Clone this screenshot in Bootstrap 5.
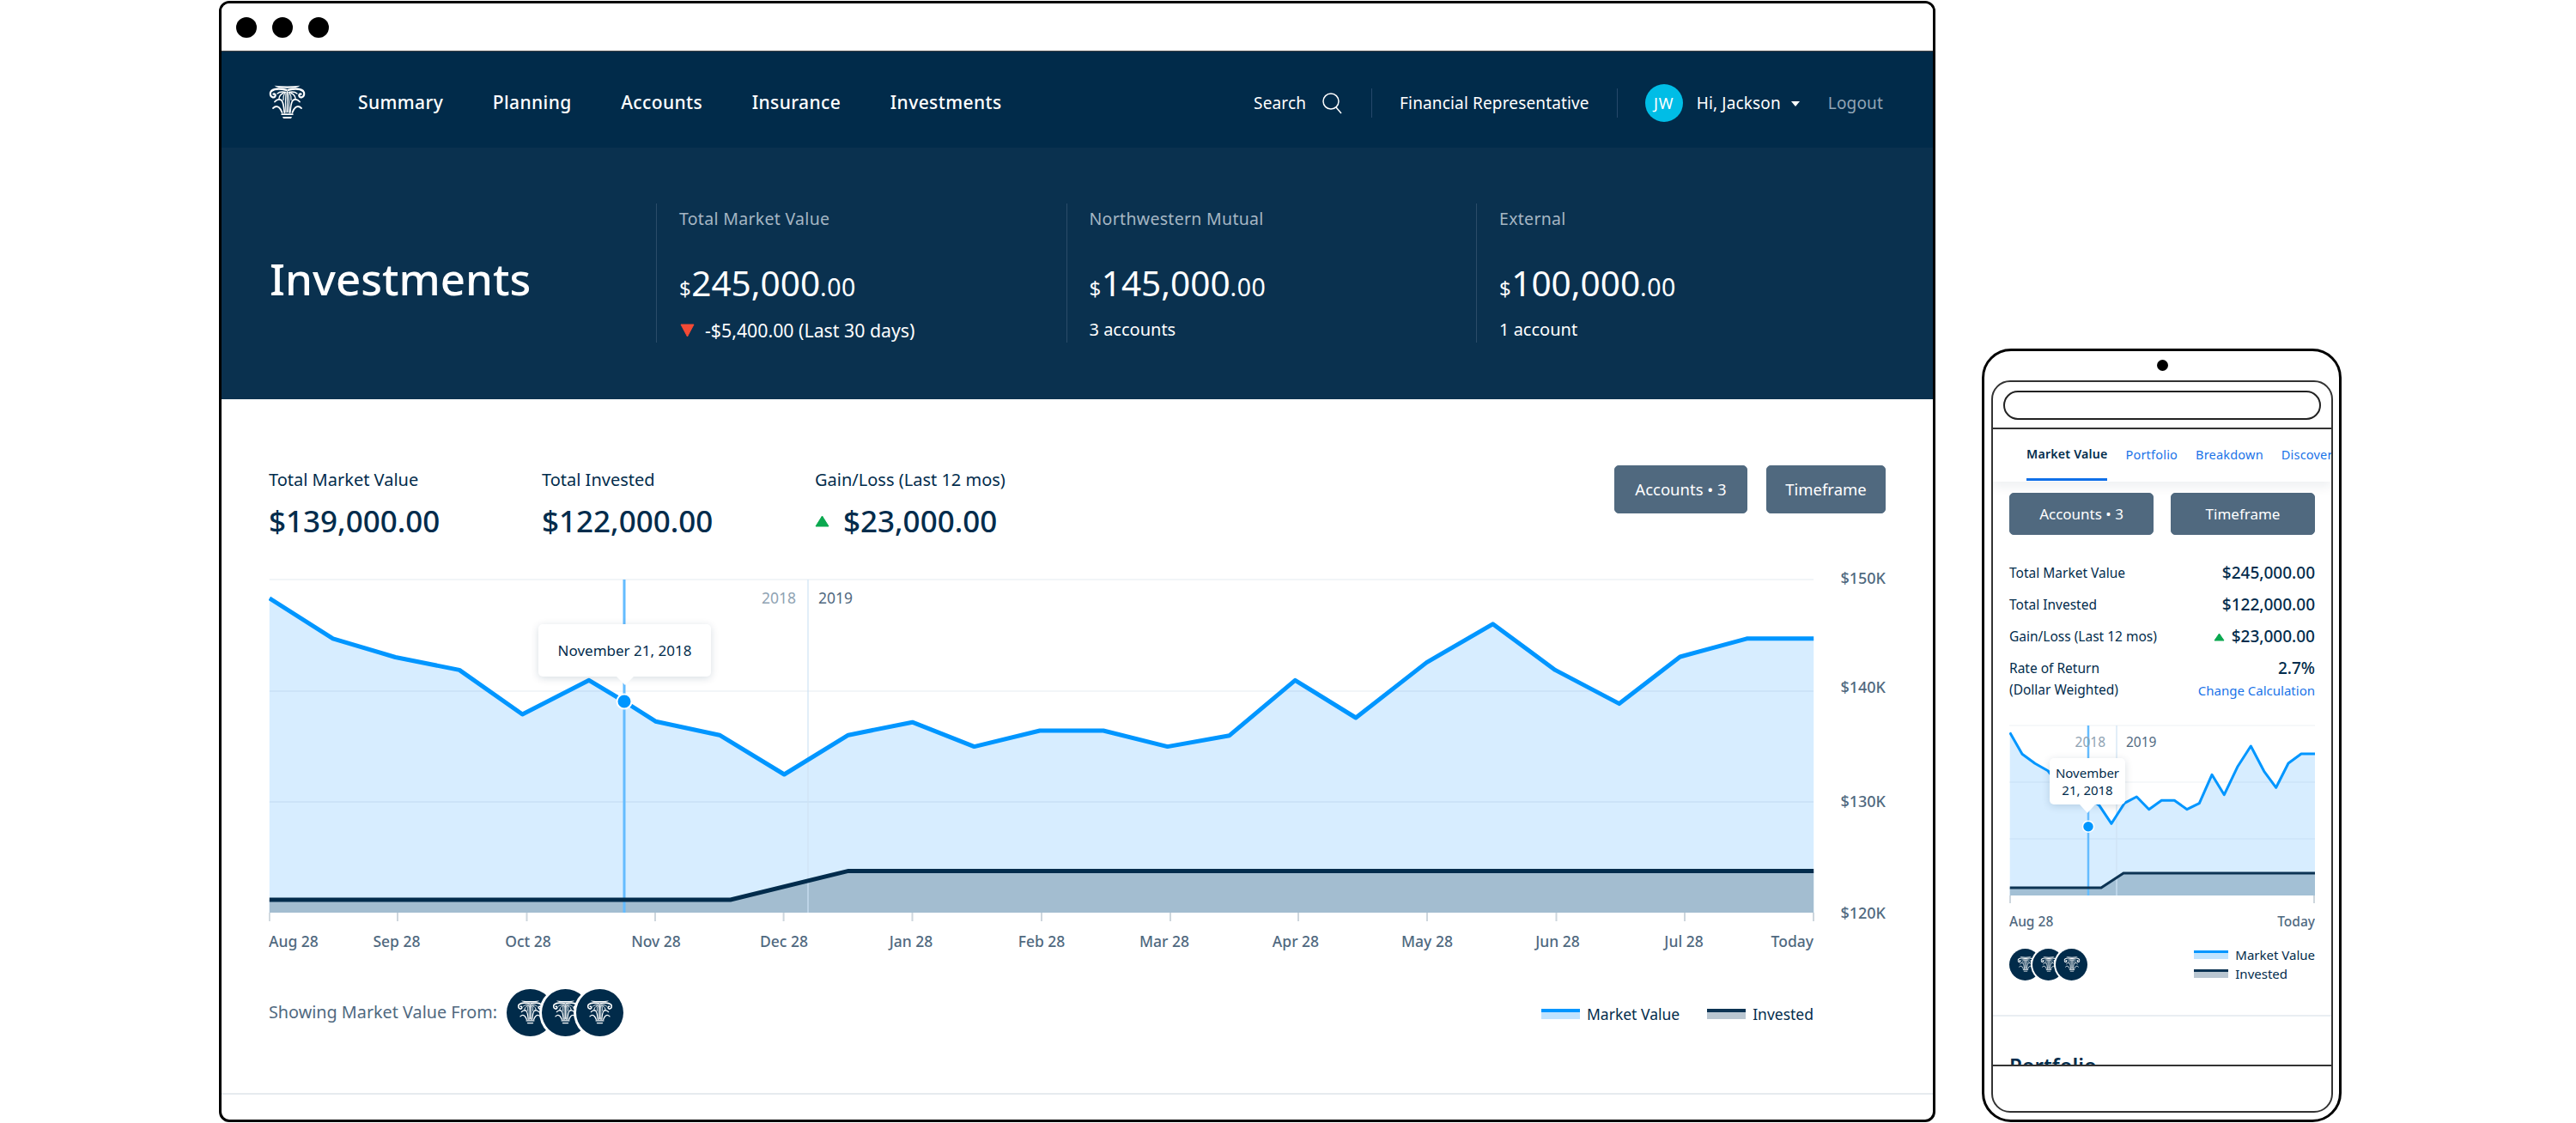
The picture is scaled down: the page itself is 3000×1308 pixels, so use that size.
<!DOCTYPE html>
<html lang="en">
<head>
    <meta charset="UTF-8">
    <title>Investments</title>
    <link href="https://cdn.jsdelivr.net/npm/bootstrap@5.3.1/dist/css/bootstrap.min.css" rel="stylesheet">
    <style>
        body {
            width: 3000px;
            height: 1308px;
            overflow: hidden;
            padding: 0 0 1px 255px;
            gap: 54px;
            font-family: "Noto Sans", "Open Sans", sans-serif;
            color: #022c4c;
            background: #fff;
        }

        /* desktop window */
        .browser-frame {
            width: 1999px;
            height: 1306px;
            border: 3px solid #000;
            border-radius: 12px;
            overflow: hidden;
        }

        .title-bar {
            height: 56px;
            padding-left: 17px;
            gap: 18px;
            border-bottom: 1px solid #444;
        }

        .title-bar span {
            width: 24px;
            height: 24px;
            border-radius: 50%;
            background: #000;
        }

        .top-bar {
            height: 112px;
            padding: 6px 58px 0 54px;
            background: #012b4a;
        }

        .brand-logo {
            width: 45px;
            height: 40px;
            margin-right: 60px;
        }

        .top-bar .nav {
            padding-top: 2px;
        }

        .top-bar .nav-link {
            color: #fff;
            font-size: 21px;
            font-weight: 500;
            letter-spacing: .4px;
            padding: 0;
            margin-right: 57.5px;
        }

        .top-tools {
            padding-top: 2px;
            font-size: 19px;
            letter-spacing: .15px;
            color: #fff;
        }

        .search-icon {
            margin-left: 18px;
            margin-right: 1px;
        }

        .top-sep {
            width: 1px;
            height: 34px;
            background: #26486a;
            margin: 0 32px;
        }

        .avatar {
            width: 44px;
            height: 44px;
            border-radius: 50%;
            background: #00bde6;
            font-size: 18px;
            letter-spacing: 1px;
        }

        .caret-down {
            margin: 2px 33px 0 12px;
            border-left: 5px solid transparent;
            border-right: 5px solid transparent;
            border-top: 6px solid #fff;
        }

        .logout-link {
            color: #91a5b5;
            text-decoration: none;
        }

        .hero-band {
            height: 293px;
            padding: 65px 0 0 56px;
            background: #0a314f;
            color: #fff;
        }

        .hero-title {
            width: 450px;
            height: 162px;
            font-size: 51px;
            font-weight: 500;
            margin: 0;
            padding-top: 13px;
        }

        .hero-col {
            width: 477.5px;
            height: 162px;
            padding-left: 26px;
            border-left: 1px solid #2b4c69;
            font-size: 20px;
        }

        .hero-label {
            margin-top: 3px;
            font-size: 19.5px;
            color: #a5b6c3;
            letter-spacing: .3px;
        }

        .hero-amount {
            font-size: 40.5px;
            line-height: 48px;
            margin-top: 37px;
        }

        .hero-amount small {
            font-size: 28.5px;
            letter-spacing: .5px;
        }

        .hero-amount small:first-child {
            font-size: 24px;
        }

        .hero-sub {
            margin-top: 9px;
        }

        .hero-delta {
            font-size: 21.3px;
            gap: 10px;
        }

        /* desktop content */
        .main-sec {
            padding: 77px 55px 0;
            height: 809px;
        }

        .stat-head {
            height: 118px;
        }

        .stat-col {
            width: 318px;
        }

        .stat-label {
            font-size: 20px;
            line-height: 26px;
            margin-top: 4px;
        }

        .stat-value {
            font-size: 35px;
            font-weight: 500;
            line-height: 42px;
            margin-top: 14px;
        }

        .btn-slate {
            --bs-btn-color: #fff;
            --bs-btn-bg: #50697f;
            --bs-btn-border-color: #50697f;
            --bs-btn-hover-color: #fff;
            --bs-btn-hover-bg: #435a6f;
            --bs-btn-hover-border-color: #435a6f;
            width: 139px;
            height: 56px;
            padding: 0;
            font-size: 18.5px;
            border-radius: 5px;
        }

        .btn-wider {
            width: 155px;
        }

        .btn-pair {
            gap: 22px;
        }

        .chart-wrap {
            position: relative;
        }

        .chart-wrap svg {
            display: block;
        }

        .axis-text {
            font-size: 18px;
            font-weight: 500;
            fill: #50697f;
        }

        .month-text {
            font-size: 17.5px;
        }

        .year-text {
            font-size: 17.5px;
        }

        .chart-tip {
            position: absolute;
            background: #fff;
            border-radius: 5px;
            box-shadow: 0 2px 10px rgba(2, 44, 76, .16);
            color: #022c4c;
            text-align: center;
        }

        .chart-tip::after {
            content: "";
            position: absolute;
            left: 50%;
            top: 100%;
            margin-left: -10px;
            border-left: 10px solid transparent;
            border-right: 10px solid transparent;
            border-top: 10px solid #fff;
        }

        .tip-wide {
            left: 314px;
            top: 67px;
            width: 201px;
            height: 61px;
            font-size: 17px;
            line-height: 61px;
        }

        .source-row {
            margin-top: 41px;
            height: 56px;
        }

        .source-label {
            font-size: 19.8px;
            color: #50697f;
            margin-right: 11px;
        }

        .logo-dot {
            width: 55px;
            height: 55px;
            border-radius: 50%;
            background: #012b4a;
            box-shadow: 0 0 0 3px #fff;
            margin-right: -14.500px;
            position: relative;
        }

        .logo-dot svg {
            width: 31px;
            height: 28px;
        }

        .legend-text {
            font-size: 17.5px;
            margin-top: 4px;
            margin-right: 84px;
        }

        .legend-gap {
            margin-right: 32px;
        }

        .swatch {
            width: 45px;
            height: 12px;
            border-top: 4px solid #0096ff;
            background: #bfe3ff;
        }

        .swatch-dark {
            border-top-color: #0c3353;
            background: #b9c6d1;
        }

        .page-rule {
            margin-top: 66px;
            margin-left: -55px;
            margin-right: -55px;
            border-top: 2px solid #e6ebef;
        }

        /* phone */
        .phone-frame {
            position: relative;
            width: 419px;
            height: 901px;
            border: 3px solid #000;
            border-radius: 34px;
            padding: 34px 8px 0;
            background: #fff;
        }

        .phone-cam {
            position: absolute;
            left: 201px;
            top: 10px;
            width: 13px;
            height: 13px;
            border-radius: 50%;
            background: #000;
        }

        .phone-screen {
            width: 398px;
            height: 853px;
            border: 2px solid #333;
            border-radius: 22px;
            overflow: hidden;
        }

        .phone-head {
            height: 55px;
            padding: 10px 12px 0;
            border-bottom: 2px solid #333;
        }

        .address-pill {
            height: 34px;
            border: 2px solid #222;
            border-radius: 17px;
        }

        .phone-body {
            height: 742px;
            overflow: hidden;
            border-bottom: 2px solid #333;
        }

        .phone-tabs {
            height: 61px;
            padding-left: 39px;
            flex-wrap: nowrap;
            overflow: hidden;
            box-shadow: 0 6px 12px rgba(2, 44, 76, .07);
            position: relative;
        }

        .phone-tabs .nav-link {
            padding: 0;
            height: 60px;
            line-height: 58px;
            margin-right: 21px;
            font-size: 14.5px;
            color: #1a73e8;
            white-space: nowrap;
            letter-spacing: .2px;
        }

        .phone-tabs .nav-link.active {
            color: #022c4c;
            font-size: 14.2px;
            font-weight: 600;
            border-bottom: 3px solid #0f6fe8;
        }

        .phone-sec {
            padding: 13px 19px 0;
        }

        .phone-sec .btn-slate {
            height: 49px;
            width: 168px;
            font-size: 17px;
        }

        .fig-list {
            margin-top: 26px;
            font-size: 15.5px;
        }

        .fig-row {
            height: 37px;
        }

        .fig-list strong {
            font-size: 19px;
            font-weight: 500;
        }

        .fig-last {
            line-height: 25px;
            height: 50px;
            margin-top: 6px;
        }

        .fig-last .change-link {
            font-size: 15px;
        }

        .change-link {
            color: #1a73e8;
            text-decoration: none;
        }

        .phone-chart {
            margin-top: 24px;
        }

        .axis-small {
            font-size: 15.5px;
            font-weight: 500;
            fill: #50697f;
        }

        .tip-narrow {
            left: 47px;
            top: 43px;
            width: 88px;
            height: 54px;
            font-size: 15px;
            line-height: 20px;
            padding-top: 7px;
        }

        .tip-narrow::after {
            margin-left: -9px;
            border-left-width: 9px;
            border-right-width: 9px;
        }

        .phone-legend {
            margin: 16px -19px 0;
            padding: 0 19px 37px;
            border-bottom: 2px solid #e9eef2;
        }

        .phone-legend .logo-dot {
            width: 37px;
            height: 37px;
            margin-right: -10px;
            box-shadow: 0 0 0 2px #fff;
        }

        .phone-legend .logo-dot svg {
            width: 20px;
            height: 18px;
        }

        .phone-legend .swatch {
            width: 40px;
            height: 10px;
            border-top-width: 3px;
        }

        .phone-legend .legend-text {
            font-size: 15px;
            line-height: 22px;
            margin: 0;
        }

        .portfolio-title {
            margin-top: 39px;
            font-size: 24px;
            font-weight: 600;
        }
    </style>
</head>
<body class="d-flex align-items-end">

    <!-- logo used in nav and in the source circles -->
    <svg width="0" height="0" class="position-absolute">
        <symbol id="column-half" viewBox="0 0 42 40">
            <g fill="none" stroke="#fff" stroke-linecap="round">
                <path d="M20 5.800C13 4 6 4.200 2.500 7 .2 9.500 1 13.500 4.200 14.300c2.300.5 3.500-1.300 2.800-3-.4-.9-1.300-1.100-2-.8" stroke-width="2.300"/>
                <path d="M19.500 8.500C15 7.500 11.500 8 9.500 10" stroke-width="1.300"/>
                <path d="M6.500 19.500c2.500-3 6-3.500 8-1.500 2.300 2.500 2.700 9 3.200 14" stroke-width="1.800"/>
                <path d="M4.500 27c2.500-2.500 5-2.500 7-.8 1.800 1.500 2.700 3.800 3.500 5.800" stroke-width="1.800"/>
                <path d="M16.500 9.500c-3.500 1.500-5 4-5 6.500" stroke-width="1.400"/>
                <path d="M18 9.500c-1.500 2.500-1.800 5-1.500 8" stroke-width="1.200"/>
                <path d="M19.500 9.500c-.7 6-.7 15 0 22.500" stroke-width="1.200"/>
            </g>
        </symbol>
        <symbol id="column-logo" viewBox="0 0 42 40">
            <path d="M6 .8Q21 2.300 36 .8 33 3.800 21 3.800 9 3.800 6 .8Z" fill="#fff"/>
            <use href="#column-half" width="42" height="40"/>
            <use href="#column-half" width="42" height="40" transform="matrix(-1 0 0 1 42 0)"/>
            <path d="M21 7v25" stroke="#fff" stroke-width="1.200"/>
            <path d="M14 33.300h14v1.700H14zM15.500 37h11l-1 2h-9z" fill="#fff"/>
        </symbol>
    </svg>

    <div class="browser-frame flex-shrink-0">
        <div class="title-bar d-flex align-items-center bg-white">
            <span></span><span></span><span></span>
        </div>

        <nav class="top-bar d-flex align-items-center">
            <svg class="brand-logo flex-shrink-0"><use href="#column-logo"/></svg>
            <ul class="nav">
                <li class="nav-item"><a class="nav-link" href="#">Summary</a></li>
                <li class="nav-item"><a class="nav-link" href="#">Planning</a></li>
                <li class="nav-item"><a class="nav-link" href="#">Accounts</a></li>
                <li class="nav-item"><a class="nav-link" href="#">Insurance</a></li>
                <li class="nav-item"><a class="nav-link" href="#">Investments</a></li>
            </ul>
            <div class="top-tools d-flex align-items-center ms-auto">
                <span>Search</span>
                <svg class="search-icon" width="25" height="25" viewBox="0 0 25 25" fill="none" stroke="#fff" stroke-width="1.500">
                    <circle cx="11" cy="10" r="9"/>
                    <path d="M17 17l6 7"/>
                </svg>
                <span class="top-sep"></span>
                <span>Financial Representative</span>
                <span class="top-sep"></span>
                <span class="avatar d-flex align-items-center justify-content-center">JW</span>
                <span class="ms-3">Hi, Jackson</span>
                <span class="caret-down"></span>
                <a class="logout-link" href="#">Logout</a>
            </div>
        </nav>

        <section class="hero-band d-flex">
            <h1 class="hero-title d-flex align-items-center">Investments</h1>
            <div class="hero-col">
                <div class="hero-label">Total Market Value</div>
                <div class="hero-amount"><small>$</small>245,000<small>.00</small></div>
                <div class="hero-sub hero-delta d-flex align-items-center">
                    <svg width="20" height="16" viewBox="0 0 20 16"><path d="M2 1h15l-7.500 14z" fill="#f44a35" stroke="#f44a35" stroke-linejoin="round"/></svg>
                    -$5,400.00 (Last 30 days)
                </div>
            </div>
            <div class="hero-col">
                <div class="hero-label">Northwestern Mutual</div>
                <div class="hero-amount"><small>$</small>145,000<small>.00</small></div>
                <div class="hero-sub">3 accounts</div>
            </div>
            <div class="hero-col">
                <div class="hero-label">External</div>
                <div class="hero-amount"><small>$</small>100,000<small>.00</small></div>
                <div class="hero-sub">1 account</div>
            </div>
        </section>

        <section class="main-sec bg-white">
            <div class="stat-head d-flex align-items-start">
                <div class="stat-col">
                    <div class="stat-label">Total Market Value</div>
                    <div class="stat-value">$139,000.00</div>
                </div>
                <div class="stat-col">
                    <div class="stat-label">Total Invested</div>
                    <div class="stat-value">$122,000.00</div>
                </div>
                <div class="stat-col">
                    <div class="stat-label">Gain/Loss (Last 12 mos)</div>
                    <div class="stat-value d-flex align-items-center">
                        <svg class="me-3" width="17" height="14" viewBox="0 0 17 14"><path d="M8.500 1L16 13H1z" fill="#0aa84f" stroke="#0aa84f" stroke-linejoin="round"/></svg>
                        $23,000.00
                    </div>
                </div>
                <div class="btn-pair d-flex ms-auto">
                    <button class="btn btn-slate btn-wider" type="button">Accounts &bull; 3</button>
                    <button class="btn btn-slate" type="button">Timeframe</button>
                </div>
            </div>

            <div class="chart-wrap">
                <svg width="1883" height="450" viewBox="313 660 1883 450">
                    <path fill="#d7edff" d="M313.800 696.900L387.800 743.800 460.500 765.500 535 780.400 608.400 832 686 792.300 727 817 763.400 840.200 838 856.200 913.300 902 987.900 856.200 1062.500 841.200 1134.600 869.600 1211 851 1285 851 1359.700 869.600 1431.800 856.700 1508.300 792.300 1579 836 1661.400 771.600 1738.500 726.800 1811.200 780.400 1885.800 819.600 1956.600 765 2034.400 743.800 2112.200 743.800V1063H313.800Z"/>
                    <path d="M313.800 675H2112M313.800 805H2112M313.800 934H2112" stroke="#003c78" stroke-opacity=".05" stroke-width="2"/>
                    <path fill="#a3bdd0" d="M313.800 1048H850.800L988 1014.400H2112.200V1063H313.800Z"/>
                    <path d="M941 675V1063" stroke="#cfe3f5" stroke-width="2" opacity=".6"/>
                    <path d="M727 675V1063" stroke="#64bcff" stroke-width="3"/>
                    <path fill="none" stroke="#0096ff" stroke-width="5" stroke-linejoin="round" d="M313.800 696.900L387.800 743.800 460.500 765.500 535 780.400 608.400 832 686 792.300 727 817 763.400 840.200 838 856.200 913.300 902 987.900 856.200 1062.500 841.200 1134.600 869.600 1211 851 1285 851 1359.700 869.600 1431.800 856.700 1508.300 792.300 1579 836 1661.400 771.600 1738.500 726.800 1811.200 780.400 1885.800 819.600 1956.600 765 2034.400 743.800 2112.200 743.800"/>
                    <path fill="none" stroke="#022c4c" stroke-width="5" d="M313.800 1048H850.800L988 1014.400H2112.200"/>
                    <path d="M313.800 1063V1073M463 1063V1073M613.500 1063V1073M763 1063V1073M912.600 1063V1073M1062.500 1063V1073M1213 1063V1073M1363 1063V1073M1512 1063V1073M1662 1063V1073M1812.500 1063V1073M1962 1063V1073M2112 1063V1073" stroke="#cdd6dd" stroke-width="2"/>
                    <circle cx="727" cy="817" r="8.500" fill="#0096ff" stroke="#fff" stroke-width="2"/>
                    <text class="year-text" x="927" y="703" text-anchor="end" fill="#8fa3b3">2018</text>
                    <text class="year-text" x="953" y="703" fill="#50697f">2019</text>
                    <g class="axis-text month-text" text-anchor="middle">
                        <text x="313" y="1103" text-anchor="start">Aug 28</text>
                        <text x="462" y="1103">Sep 28</text>
                        <text x="615" y="1103">Oct 28</text>
                        <text x="764" y="1103">Nov 28</text>
                        <text x="913" y="1103">Dec 28</text>
                        <text x="1061" y="1103">Jan 28</text>
                        <text x="1213" y="1103">Feb 28</text>
                        <text x="1356" y="1103">Mar 28</text>
                        <text x="1509" y="1103">Apr 28</text>
                        <text x="1662" y="1103">May 28</text>
                        <text x="1814" y="1103">Jun 28</text>
                        <text x="1961" y="1103">Jul 28</text>
                        <text x="2112" y="1103" text-anchor="end">Today</text>
                    </g>
                    <g class="axis-text" text-anchor="end">
                        <text x="2196" y="680">$150K</text>
                        <text x="2196" y="807">$140K</text>
                        <text x="2196" y="940">$130K</text>
                        <text x="2196" y="1070">$120K</text>
                    </g>
                </svg>
                <div class="chart-tip tip-wide">November 21, 2018</div>
            </div>

            <div class="source-row d-flex align-items-center">
                <span class="source-label">Showing Market Value From:</span>
                <span class="logo-dot d-flex align-items-center justify-content-center"><svg><use href="#column-logo"/></svg></span>
                <span class="logo-dot d-flex align-items-center justify-content-center"><svg><use href="#column-logo"/></svg></span>
                <span class="logo-dot d-flex align-items-center justify-content-center"><svg><use href="#column-logo"/></svg></span>
                <div class="legend-text d-flex align-items-center ms-auto">
                    <span class="swatch me-2"></span><span class="legend-gap">Market Value</span>
                    <span class="swatch swatch-dark me-2"></span><span>Invested</span>
                </div>
            </div>
            <div class="page-rule"></div>
        </section>
    </div>

    <div class="phone-frame flex-shrink-0">
        <span class="phone-cam"></span>
        <div class="phone-screen">
            <div class="phone-head"><div class="address-pill"></div></div>
            <div class="phone-body">
                <ul class="nav phone-tabs bg-white">
                    <li class="nav-item"><a class="nav-link active" href="#">Market Value</a></li>
                    <li class="nav-item"><a class="nav-link" href="#">Portfolio</a></li>
                    <li class="nav-item"><a class="nav-link" href="#">Breakdown</a></li>
                    <li class="nav-item"><a class="nav-link" href="#">Discover</a></li>
                </ul>
                <div class="phone-sec">
                    <div class="d-flex justify-content-between">
                        <button class="btn btn-slate" type="button">Accounts &bull; 3</button>
                        <button class="btn btn-slate" type="button">Timeframe</button>
                    </div>

                    <div class="fig-list">
                        <div class="fig-row d-flex justify-content-between align-items-center"><span>Total Market Value</span><strong>$245,000.00</strong></div>
                        <div class="fig-row d-flex justify-content-between align-items-center"><span>Total Invested</span><strong>$122,000.00</strong></div>
                        <div class="fig-row d-flex justify-content-between align-items-center"><span>Gain/Loss (Last 12 mos)</span>
                            <strong class="d-flex align-items-center">
                                <svg class="me-2" width="13" height="10" viewBox="0 0 13 10"><path d="M6.500 1L12 9H1z" fill="#0aa84f" stroke="#0aa84f" stroke-linejoin="round"/></svg>
                                $23,000.00
                            </strong>
                        </div>
                        <div class="fig-last d-flex justify-content-between">
                            <span>Rate of Return<br>(Dollar Weighted)</span>
                            <span class="text-end"><strong>2.7%</strong><br><a class="change-link" href="#">Change Calculation</a></span>
                        </div>
                    </div>

                    <div class="chart-wrap phone-chart">
                        <svg width="356" height="245" viewBox="2340 840 356 245">
                            <path fill="#d7edff" d="M2340.700 853.300L2355 878.300 2370 889.300 2385 897.700 2400 916.700 2415 910 2430 926.700 2445 938.300 2459 959.300 2474.300 935.300 2488.300 928 2502.700 942.700 2517.300 932.300 2532.300 932.300 2547 942.700 2561.300 935.700 2576 902.300 2590.300 925.700 2605.700 893.300 2621.300 869 2636.700 898.300 2650.700 917.300 2665 889 2680 878 2696 878V1043H2340.700Z"/>
                            <path d="M2340 845H2696M2340 911H2696M2340 977H2696" stroke="#003c78" stroke-opacity=".05" stroke-width="1.500"/>
                            <path fill="#a3c0d5" d="M2340.700 1034H2447L2473 1017H2696V1043H2340.700Z"/>
                            <path d="M2465 845V1043" stroke="#cfe3f5" stroke-width="2" opacity=".6"/>
                            <path d="M2432 845V1043" stroke="#64bcff" stroke-width="2.500"/>
                            <path fill="none" stroke="#0096ff" stroke-width="3" stroke-linejoin="round" d="M2340.700 853.300L2355 878.300 2370 889.300 2385 897.700 2400 916.700 2415 910 2430 926.700 2445 938.300 2459 959.300 2474.300 935.300 2488.300 928 2502.700 942.700 2517.300 932.300 2532.300 932.300 2547 942.700 2561.300 935.700 2576 902.300 2590.300 925.700 2605.700 893.300 2621.300 869 2636.700 898.300 2650.700 917.300 2665 889 2680 878 2696 878"/>
                            <path fill="none" stroke="#0c3353" stroke-width="3" d="M2340.700 1034H2447L2473 1017H2696"/>
                            <path d="M2341 1043V1052M2695 1043V1052" stroke="#cdd6dd" stroke-width="2"/>
                            <circle cx="2432" cy="962.700" r="6.500" fill="#0096ff" stroke="#fff" stroke-width="1.500"/>
                            <text x="2452" y="870" text-anchor="end" font-size="15.500" fill="#8fa3b3">2018</text>
                            <text x="2476" y="870" font-size="15.500" fill="#50697f">2019</text>
                            <text class="axis-small" x="2340" y="1079">Aug 28</text>
                            <text class="axis-small" x="2696" y="1079" text-anchor="end">Today</text>
                        </svg>
                        <div class="chart-tip tip-narrow">November<br>21, 2018</div>
                    </div>

                    <div class="phone-legend d-flex justify-content-between align-items-center">
                        <div class="d-flex">
                            <span class="logo-dot d-flex align-items-center justify-content-center"><svg><use href="#column-logo"/></svg></span>
                            <span class="logo-dot d-flex align-items-center justify-content-center"><svg><use href="#column-logo"/></svg></span>
                            <span class="logo-dot d-flex align-items-center justify-content-center"><svg><use href="#column-logo"/></svg></span>
                        </div>
                        <div class="legend-text">
                            <div class="d-flex align-items-center"><span class="swatch me-2"></span>Market Value</div>
                            <div class="d-flex align-items-center"><span class="swatch swatch-dark me-2"></span>Invested</div>
                        </div>
                    </div>

                    <div class="portfolio-title">Portfolio</div>
                </div>
            </div>
        </div>
    </div>

    <script src="https://cdn.jsdelivr.net/npm/bootstrap@5.3.1/dist/js/bootstrap.bundle.min.js"></script>
</body>
</html>
